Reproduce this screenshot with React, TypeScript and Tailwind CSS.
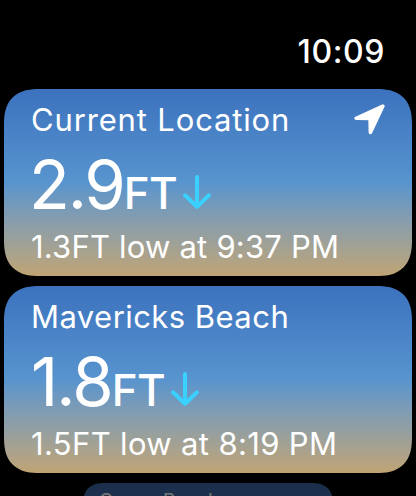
type Spot = {
  name: string;
  height: string;
  next: string;
  current?: boolean;
  nameTracking: string;
  heightTracking: string;
  nextTracking: string;
};

const spots: Spot[] = [
  {
    name: "Current Location",
    height: "2.9",
    next: "1.3FT low at 9:37 PM",
    current: true,
    nameTracking: "tracking-[0.85px]",
    heightTracking: "ml-[-2px] tracking-[-2.2px]",
    nextTracking: "tracking-[0.2px]",
  },
  {
    name: "Mavericks Beach",
    height: "1.8",
    next: "1.5FT low at 8:19 PM",
    nameTracking: "tracking-[0.45px]",
    heightTracking: "tracking-[-1.9px]",
    nextTracking: "tracking-[0.35px]",
  },
];

function LocationArrow() {
  return (
    <svg className="h-[32px] w-[32px]" viewBox="0 0 32 32" fill="white">
      <path
        d="M28.8 2.2 L2.2 14.3 L16.1 14.5 L16.4 28.4 Z"
        stroke="white"
        strokeWidth="3.6"
        strokeLinejoin="round"
      />
    </svg>
  );
}

function FallingArrow() {
  return (
    <svg
      className="mb-[15px] ml-[5px] h-[36px] w-[30px]"
      viewBox="0 0 30 36"
      fill="none"
      stroke="#3ad0ff"
      strokeWidth="4"
      strokeLinecap="round"
      strokeLinejoin="round"
    >
      <path d="M15 3V32.5M3 21.3L15 32.8L27 21.3" />
    </svg>
  );
}

function SpotCard({ spot }: { spot: Spot }) {
  return (
    <div className="h-[187px] shrink-0 rounded-[36px] bg-linear-to-b from-[#3c72be] via-[#5894ce] to-[#c0a473] pt-[15px] pr-[26px] pl-[27px] [corner-shape:superellipse(1.35)]">
      <div className="flex h-8 justify-between">
        <span className={`text-[31px] leading-8 ${spot.nameTracking}`}>{spot.name}</span>
        {spot.current && <LocationArrow />}
      </div>
      <div className="mt-[9px] flex h-20 items-end">
        <span className="flex items-baseline">
          <span className={`text-[67px] leading-[80px] ${spot.heightTracking}`}>{spot.height}</span>
          <span className="text-[44px] leading-none font-medium tracking-[-0.7px]">FT</span>
        </span>
        <FallingArrow />
      </div>
      <div className={`mt-[6px] text-[31px] leading-8 ${spot.nextTracking}`}>{spot.next}</div>
    </div>
  );
}

export default function App() {
  return (
    <div className="flex h-[496px] w-[416px] flex-col overflow-hidden bg-black px-1 font-['Inter',sans-serif] whitespace-nowrap text-white">
      <div className="flex h-[89px] shrink-0 justify-end pt-[36px] pr-[27px]">
        <span className="text-[32px] leading-8 font-medium tracking-[0.6px]">10:09</span>
      </div>
      <div className="flex flex-col gap-[10px]">
        {spots.map((spot) => (
          <SpotCard key={spot.name} spot={spot} />
        ))}
        <div className="ml-[79px] h-[115px] w-[250px] shrink-0 rounded-[22px] bg-linear-to-b from-[#1b2e4c] via-[#233b52] to-[#4d422e] pt-[8px] pl-4 text-[19px] leading-5 text-[#777] [corner-shape:superellipse(1.35)]">
          Ocean Beach
        </div>
      </div>
    </div>
  );
}
